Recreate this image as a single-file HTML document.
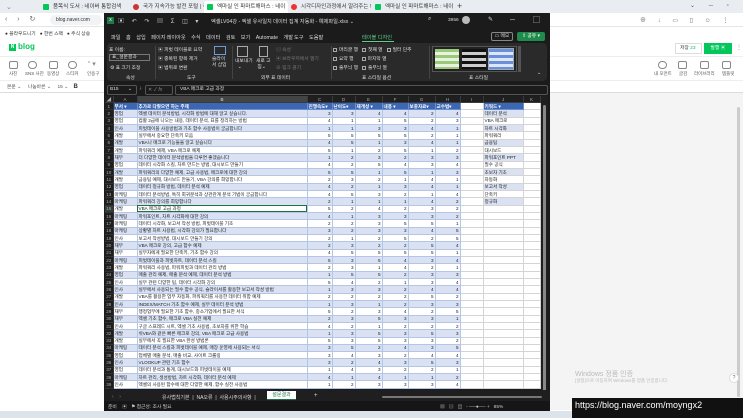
<!DOCTYPE html>
<html><head><meta charset="utf-8">
<style>
*{box-sizing:border-box;margin:0;padding:0}
body{width:743px;height:418px;overflow:hidden;position:relative;background:#fff;font-family:"Liberation Sans","Noto Sans CJK KR",sans-serif;font-size:6px;color:#333}
.a{position:absolute;white-space:nowrap}
.tab{position:absolute;top:1px;height:12px;font-size:5.5px;line-height:12px;color:#333;padding-left:13px}
.tab i{position:absolute;left:3px;top:3px;width:6px;height:6px;background:#03c75a;border-radius:1px}
.ib{position:absolute;width:9px;height:8px;border:1px solid #888;border-radius:2px}
.lab{position:absolute;font-size:4.5px;color:#555}
#xl{position:absolute;left:104px;top:13px;width:446px;height:398px;background:#1b1b1b;color:#ddd;overflow:hidden}
#xl .a{color:#ddd}
.rib{position:absolute;left:3px;top:30px;width:440px;height:38px;background:#2a2a2a;border-radius:4px}
.sep{position:absolute;top:33px;width:1px;height:33px;background:#444}
.rt{position:absolute;font-size:4.8px;color:#ddd}
.chk{display:inline-block;width:4px;height:4px;border:0.6px solid #aaa;margin-right:2px;vertical-align:middle}
table{position:absolute;left:1px;top:83px;border-collapse:collapse;table-layout:fixed;font-size:4.6px}
tr{height:7.33px}
td{height:7.33px;padding:0 1px;overflow:hidden;white-space:nowrap;line-height:5px;color:#222;border-right:0.5px solid #d4d4d4;border-bottom:0.5px solid #d4d4d4}
td.n{text-align:right}
td.h{background:#1f1f1f;color:#aaa;text-align:center;border-color:#333}
tr.ch{height:6.5px}
tr.ch td{height:6.5px;background:#1f1f1f;color:#aaa;text-align:center;border-color:#3a3a3a}
tr.hd td.t{background:#3b67b4;color:#fff;font-weight:bold;border-color:#6b8ed0}
tr.b td.t{background:#d9e1f2;border-color:#b4c6e7}
tr.w td.t{background:#fff;border-color:#b4c6e7}
td.kw{background:#d9e1f2}
td.e{background:#fff}
</style></head><body>
<div class="a" style="left:0;top:0;width:743px;height:13px;background:#e9edf1"></div>
<div class="a" style="left:6px;top:3px;font-size:7px;color:#888">⌄</div>
<div class="tab" style="left:40px;width:88px">품목식 도서 : 네이버 통합검색<i></i></div>
<div class="tab" style="left:130px;width:84px">국가 지속가능 발전 포털 | 국가<i style="background:#c33;border-radius:3px"></i></div>
<div class="tab" style="left:204px;width:84px;background:#fff;border-radius:3px 3px 0 0">엑마실 인 파마트해마스 : 네이버<i></i></div>
<div class="tab" style="left:288px;width:84px">시각디자인과정에서 알려주는 !<i style="background:#e33;border-radius:3px"></i></div>
<div class="tab" style="left:372px;width:84px">엑마실 인 파마트해마스 : 네이버<i></i></div>
<div class="a" style="left:457px;top:1px;font-size:9px;color:#444">+</div>
<div class="a" style="left:690px;top:2px;font-size:6px;color:#555;letter-spacing:6px">⌄ ─ ▫ ✕</div>
<div class="a" style="left:0;top:13px;width:743px;height:14px;background:#fff;border-bottom:1px solid #e5e5e5"></div>
<div class="a" style="left:5px;top:15px;font-size:7px;color:#666;letter-spacing:4px">‹ › ↻</div>
<div class="a" style="left:50px;top:15px;width:52px;height:10px;background:#f1f3f4;border-radius:5px;font-size:5px;line-height:10px;padding-left:6px;color:#333">blog.naver.com</div>
<div class="a" style="left:640px;top:15px;font-size:6px;color:#666;letter-spacing:5px">⊕ ↓ ▭ ▯ ☺ ⋮</div>
<div class="a" style="left:5px;top:30px;font-size:4.8px;color:#333">● 블라우드니기 &nbsp; ● 한번 스팩 &nbsp; ● 주식 상승</div>
<div class="a" style="left:0;top:38px;width:743px;height:19px;border-bottom:1px solid #eee"></div>
<div class="a" style="left:9px;top:44px;width:7px;height:7px;background:#03c75a;color:#fff;font-size:5px;line-height:7px;text-align:center;font-weight:bold">N</div>
<div class="a" style="left:18px;top:42px;font-size:8px;color:#03c75a;font-weight:bold">blog</div>
<div class="a" style="left:675px;top:43px;width:27px;height:11px;border:1px solid #ddd;font-size:4.8px;line-height:9px;padding-left:4px;color:#333">저장 <span style="color:#03c75a">23</span></div>
<div class="a" style="left:704px;top:43px;width:28px;height:11px;background:#03c75a;font-size:4.8px;line-height:11px;text-align:center;color:#fff">발행 ▣</div>
<div class="a" style="left:736px;top:44px;font-size:6px;color:#999">⋮</div>
<div class="ib" style="left:9px;top:61px"></div><div class="lab" style="left:9px;top:71px">사진</div>
<div class="ib" style="left:28px;top:61px;border-radius:5px"></div><div class="lab" style="left:25px;top:71px">SNS 사진</div>
<div class="ib" style="left:49px;top:61px"></div><div class="lab" style="left:47px;top:71px">동영상</div>
<div class="ib" style="left:68px;top:61px;border-radius:5px"></div><div class="lab" style="left:66px;top:71px">스티커</div>
<div class="a" style="left:88px;top:60px;font-size:7px;color:#888">“ ▾</div><div class="lab" style="left:87px;top:71px">인용구</div>
<div class="ib" style="left:658px;top:61px;border-radius:5px"></div><div class="lab" style="left:654px;top:71px">내 모먼트</div>
<div class="ib" style="left:678px;top:61px"></div><div class="lab" style="left:679px;top:71px">글감</div>
<div class="ib" style="left:700px;top:61px"></div><div class="lab" style="left:694px;top:71px">라이브러리</div>
<div class="ib" style="left:722px;top:61px"></div><div class="lab" style="left:722px;top:71px">템플릿</div>
<div class="a" style="left:0;top:80px;width:743px;height:1px;background:#eee"></div>
<div class="a" style="left:7px;top:83px;font-size:4.8px;color:#555">본문 ⌄ &nbsp;&nbsp;&nbsp; 나눔바른 ⌄ &nbsp;&nbsp;&nbsp; 15 ⌄ &nbsp;&nbsp; <b style="font-size:6px;color:#333">B</b></div>
<div class="a" style="left:0;top:92px;width:743px;height:1px;background:#ddd"></div>
<div class="a" style="left:550px;top:93px;width:193px;height:317px;background:#f4f4f4"></div>
<div class="a" style="left:737px;top:107px;width:3px;height:290px;background:#ccc;border-radius:2px"></div>
<div class="a" style="left:729px;top:373px;width:10px;height:10px;border:1px solid #ddd;border-radius:5px;background:#fff;font-size:5px;text-align:center;line-height:8px;color:#666">?</div>
<div class="a" style="left:575px;top:369px;font-size:7px;color:#bbb">Windows 정품 인증</div>
<div class="a" style="left:575px;top:378px;font-size:4.5px;color:#bbb">[설정]으로 이동하여 Windows를 정품 인증합니다.</div>

<div id="xl">
 <div class="a" style="left:3px;top:4px;width:7px;height:7px;background:#1d7a45;color:#fff;font-size:5px;line-height:7px;text-align:center">x</div>
 <div class="a" style="left:14px;top:3px;font-size:6px;color:#ccc;letter-spacing:3px">▣ ↶ ↷ ▤ Σ ◫ ▾</div>
 <div class="a" style="left:107px;top:5px;font-size:5.2px">엑셀LV04강 - 엑셀 유사일치 데이터 집계 자동화 - 예제파일.xlsx ⌄</div>
 <div class="a" style="left:324px;top:3px;font-size:6px">⌕</div>
 <div class="a" style="left:344px;top:5px;font-size:4.8px">3956</div>
 <div class="a" style="left:358px;top:3px;width:8px;height:8px;border-radius:4px;background:#bbb"></div>
 <div class="a" style="left:384px;top:3px;font-size:6px">✎</div>
 <div class="a" style="left:406px;top:2px;font-size:7px;letter-spacing:8px">─ ▢ ✕</div>
 <div class="a" style="left:7px;top:21px;font-size:5.2px;word-spacing:4px">파일 홈 삽입 페이지&#8239;레이아웃 수식 데이터 검토 보기 Automate 개발&#8239;도구 도움말</div>
 <div class="a" style="left:258px;top:21px;font-size:5.2px;color:#5fd08a!important">테이블 디자인</div>
 <div class="a" style="left:258px;top:28px;width:32px;height:1px;background:#5fd08a"></div>
 <div class="a" style="left:387px;top:19px;width:22px;height:9px;border:1px solid #888;border-radius:2px;font-size:4.8px;line-height:7px;text-align:center">▭ 메모</div>
 <div class="a" style="left:413px;top:19px;width:28px;height:9px;background:#1f8b4c;border-radius:2px;font-size:4.8px;line-height:9px;text-align:center;color:#fff">⇪ 공유 ▾</div>
 <div class="rib"></div>
 <div class="sep" style="left:51px"></div><div class="sep" style="left:128px"></div><div class="sep" style="left:227px"></div><div class="sep" style="left:325px"></div>
 <div class="rt" style="left:5px;top:33px">표 이름:</div>
 <div class="a" style="left:5px;top:41px;width:41px;height:7px;border:1px solid #777;font-size:4.8px;line-height:5px;padding-left:2px">표_설문결과</div>
 <div class="rt" style="left:6px;top:51px">⚙ 표 크기 조정</div>
 <div class="rt" style="left:22px;top:61px">속성</div>
 <div class="rt" style="left:54px;top:33px">▣ 피벗 테이블로 요약</div>
 <div class="rt" style="left:54px;top:42px">▣ 중복된 항목 제거</div>
 <div class="rt" style="left:54px;top:51px">▣ 범위로 변환</div>
 <div class="a" style="left:110px;top:33px;width:12px;height:9px;border:1px solid #6b9bd6"></div>
 <div class="rt" style="left:108px;top:44px;line-height:6px">슬라이<br>서 삽입</div>
 <div class="rt" style="left:83px;top:61px">도구</div>
 <div class="a" style="left:133px;top:33px;width:11px;height:11px;border:1px solid #aaa"></div>
 <div class="rt" style="left:131px;top:46px;line-height:6px">내보내기<br>&nbsp;&nbsp;⌄</div>
 <div class="a" style="left:155px;top:33px;width:9px;height:11px;border:1px solid #aaa"></div>
 <div class="rt" style="left:152px;top:46px;line-height:6px">새로 고<br>&nbsp;침⌄</div>
 <div class="rt" style="left:172px;top:33px;color:#777">▤ 속성</div>
 <div class="rt" style="left:172px;top:42px;color:#777">▣ 브라우저에서 열기</div>
 <div class="rt" style="left:172px;top:51px;color:#777">⊘ 링크 끊기</div>
 <div class="rt" style="left:157px;top:61px">외부 표 데이터</div>
 <div class="rt" style="left:229px;top:33px"><span class="chk"></span>머리글 행 &nbsp;&nbsp;<span class="chk"></span>첫째 열 &nbsp;&nbsp;<span class="chk"></span>필터 단추</div>
 <div class="rt" style="left:229px;top:42px"><span class="chk"></span>요약 행 &nbsp;&nbsp;&nbsp;&nbsp;&nbsp;<span class="chk"></span>마지막 열</div>
 <div class="rt" style="left:229px;top:51px"><span class="chk"></span>줄무늬 행 &nbsp;&nbsp;<span class="chk"></span>줄무늬 열</div>
 <div class="rt" style="left:258px;top:61px">표 스타일 옵션</div>
 <div class="a" style="left:328px;top:33px;width:85px;height:26px;border:1px solid #555;background:#222"></div>
 <div class="a" style="left:331px;top:36px;width:24px;height:20px;background:repeating-linear-gradient(#9bc97a 0 3px,#e8f3df 3px 6px)"></div>
 <div class="a" style="left:358px;top:36px;width:24px;height:20px;background:repeating-linear-gradient(#111 0 3px,#ccc 3px 6px)"></div>
 <div class="a" style="left:384px;top:35px;width:26px;height:22px;border:1px solid #9ab;background:repeating-linear-gradient(#6b8fd6 0 3px,#dde6f6 3px 6px)"></div>
 <div class="a" style="left:414px;top:33px;width:3px;height:26px;background:#555"></div>
 <div class="rt" style="left:365px;top:61px">표 스타일</div>
 <div class="rt" style="left:433px;top:58px">⌄</div>
 <div class="a" style="left:3px;top:72px;width:30px;height:10px;border:1px solid #555;border-radius:2px;font-size:4.8px;line-height:8px;padding-left:2px">B15 &nbsp;&nbsp;&nbsp;&nbsp;&nbsp;&nbsp;⌄</div>
 <div class="a" style="left:36px;top:73px;font-size:5px">⁝</div>
 <div class="a" style="left:41px;top:72px;width:28px;height:10px;border:1px solid #555;border-radius:2px;font-size:5px;line-height:8px;color:#888!important;padding-left:2px">✕ ✓ <i>fx</i></div>
 <div class="a" style="left:71px;top:72px;width:373px;height:10px;border:1px solid #555;border-radius:2px;font-size:4.8px;line-height:8px;padding-left:4px">VBA 매크로 고급 과정</div>
 <table>
 <colgroup><col style="width:8px"><col style="width:24px"><col style="width:170px"><col style="width:25px"><col style="width:23px"><col style="width:27px"><col style="width:26px"><col style="width:27px"><col style="width:25px"><col style="width:23px"><col style="width:40px"><col style="width:17px"></colgroup>
 <tr class="ch"><td>◢</td><td>A</td><td style="background:#444;color:#ddd">B</td><td>C</td><td>D</td><td>E</td><td>F</td><td>G</td><td>H</td><td>I</td><td>J</td><td>K</td></tr>
 <tr class="hd"><td class="h">1</td><td class="t">부서 ▾</td><td class="t">추가로 다뤘으면 하는 주제</td><td class="t">진행속도▾</td><td class="t">난이도▾</td><td class="t">재개성 ▾</td><td class="t">내용 ▾</td><td class="t">보충자료▾</td><td class="t">교수법▾</td><td class="e"></td><td class="t">키워드 ▾</td><td class="e"></td></tr>
 <tr class="b"><td class="h">2</td><td class="t">영업</td><td class="t">엑셀 데이터 분석방법, 시각화 방법에 대해 알고 싶습니다.</td><td class="t n">3</td><td class="t n">3</td><td class="t n">4</td><td class="t n">4</td><td class="t n">2</td><td class="t n">4</td><td class="e"></td><td class="kw">데이터 분석</td><td class="e"></td></tr>
 <tr class="w"><td class="h">3</td><td class="t">영업</td><td class="t">컴활 2급에 나오는 내용, 데이터 분석, 표를 정리하는 방법</td><td class="t n">4</td><td class="t n">1</td><td class="t n">1</td><td class="t n">5</td><td class="t n">2</td><td class="t n">3</td><td class="e"></td><td class="e">VBA 매크로</td><td class="e"></td></tr>
 <tr class="b"><td class="h">4</td><td class="t">인사</td><td class="t">피벗테이블 사용방법과 기초 함수 사용법이 궁금합니다</td><td class="t n">1</td><td class="t n">1</td><td class="t n">3</td><td class="t n">3</td><td class="t n">4</td><td class="t n">1</td><td class="e"></td><td class="kw">차트 시각화</td><td class="e"></td></tr>
 <tr class="w"><td class="h">5</td><td class="t">개발</td><td class="t">실무에서 중요한 단축키 모음</td><td class="t n">5</td><td class="t n">5</td><td class="t n">5</td><td class="t n">5</td><td class="t n">2</td><td class="t n">1</td><td class="e"></td><td class="e">파워쿼리</td><td class="e"></td></tr>
 <tr class="b"><td class="h">6</td><td class="t">개발</td><td class="t">VBA나 매크로 기능들을 알고 싶습니다</td><td class="t n">4</td><td class="t n">5</td><td class="t n">1</td><td class="t n">3</td><td class="t n">4</td><td class="t n">1</td><td class="e"></td><td class="kw">금융팀</td><td class="e"></td></tr>
 <tr class="w"><td class="h">7</td><td class="t">개발</td><td class="t">파워쿼리 예제, VBA 매크로 예제</td><td class="t n">5</td><td class="t n">1</td><td class="t n">2</td><td class="t n">5</td><td class="t n">1</td><td class="t n">2</td><td class="e"></td><td class="e">대시보드</td><td class="e"></td></tr>
 <tr class="b"><td class="h">8</td><td class="t">재무</td><td class="t">더 다양한 데이터 분석방법을 다루면 좋겠습니다</td><td class="t n">1</td><td class="t n">2</td><td class="t n">3</td><td class="t n">2</td><td class="t n">3</td><td class="t n">3</td><td class="e"></td><td class="kw">파워포인트 PPT</td><td class="e"></td></tr>
 <tr class="w"><td class="h">9</td><td class="t">영업</td><td class="t">데이터 시각화 스킬, 차트 만드는 방법, 대시보드 만들기</td><td class="t n">4</td><td class="t n">2</td><td class="t n">5</td><td class="t n">4</td><td class="t n">3</td><td class="t n">4</td><td class="e"></td><td class="e">필수 공식</td><td class="e"></td></tr>
 <tr class="b"><td class="h">10</td><td class="t">개발</td><td class="t">파워쿼리의 다양한 예제, 고급 사용법, 매크로에 대한 강의</td><td class="t n">5</td><td class="t n">5</td><td class="t n">1</td><td class="t n">5</td><td class="t n">1</td><td class="t n">3</td><td class="e"></td><td class="kw">초보자 기초</td><td class="e"></td></tr>
 <tr class="w"><td class="h">11</td><td class="t">개발</td><td class="t">금융팀 예제, 대시보드 만들기, VBA 강의를 희망합니다</td><td class="t n">2</td><td class="t n">3</td><td class="t n">2</td><td class="t n">1</td><td class="t n">4</td><td class="t n">1</td><td class="e"></td><td class="e">자동화</td><td class="e"></td></tr>
 <tr class="b"><td class="h">12</td><td class="t">영업</td><td class="t">데이터 정규화 방법, 데이터 분석 예제</td><td class="t n">4</td><td class="t n">2</td><td class="t n">1</td><td class="t n">3</td><td class="t n">4</td><td class="t n">1</td><td class="e"></td><td class="kw">보고서 작성</td><td class="e"></td></tr>
 <tr class="w"><td class="h">13</td><td class="t">마케팅</td><td class="t">데이터 분석방법, 특히 회귀분석과 상관관계 분석 기법이 궁금합니다</td><td class="t n">4</td><td class="t n">5</td><td class="t n">3</td><td class="t n">2</td><td class="t n">1</td><td class="t n">4</td><td class="e"></td><td class="e">단축키</td><td class="e"></td></tr>
 <tr class="b"><td class="h">14</td><td class="t">마케팅</td><td class="t">파워쿼리 강의를 희망합니다</td><td class="t n">2</td><td class="t n">1</td><td class="t n">1</td><td class="t n">1</td><td class="t n">4</td><td class="t n">2</td><td class="e"></td><td class="kw">정규화</td><td class="e"></td></tr>
 <tr class="w"><td class="h" style="background:#3a3a3a;color:#6fd08f">15</td><td class="t">개발</td><td class="t" style="outline:1px solid #1e7145;outline-offset:-1px">VBA 매크로 고급 과정</td><td class="t n">5</td><td class="t n">2</td><td class="t n">4</td><td class="t n">2</td><td class="t n">3</td><td class="t n">2</td><td class="e"></td><td class="e"></td><td class="e"></td></tr>
 <tr class="b"><td class="h">16</td><td class="t">마케팅</td><td class="t">파워포인트, 차트 시각화에 대한 강의</td><td class="t n">4</td><td class="t n">1</td><td class="t n">3</td><td class="t n">3</td><td class="t n">3</td><td class="t n">2</td><td class="e"></td><td class="e"></td><td class="e"></td></tr>
 <tr class="w"><td class="h">17</td><td class="t">마케팅</td><td class="t">데이터 시각화, 보고서 작성 방법, 피벗테이블 기초</td><td class="t n">2</td><td class="t n">2</td><td class="t n">3</td><td class="t n">5</td><td class="t n">5</td><td class="t n">1</td><td class="e"></td><td class="e"></td><td class="e"></td></tr>
 <tr class="b"><td class="h">18</td><td class="t">마케팅</td><td class="t">상황별 차트 사용법, 시각화 강의가 필요합니다</td><td class="t n">3</td><td class="t n">2</td><td class="t n">3</td><td class="t n">3</td><td class="t n">4</td><td class="t n">5</td><td class="e"></td><td class="e"></td><td class="e"></td></tr>
 <tr class="w"><td class="h">19</td><td class="t">인사</td><td class="t">보고서 작성방법, 대시보드 만들기 강의</td><td class="t n">2</td><td class="t n">1</td><td class="t n">2</td><td class="t n">5</td><td class="t n">2</td><td class="t n">5</td><td class="e"></td><td class="e"></td><td class="e"></td></tr>
 <tr class="b"><td class="h">20</td><td class="t">재무</td><td class="t">VBA 매크로 강의, 고급 함수 예제</td><td class="t n">2</td><td class="t n">3</td><td class="t n">2</td><td class="t n">2</td><td class="t n">5</td><td class="t n">4</td><td class="e"></td><td class="e"></td><td class="e"></td></tr>
 <tr class="w"><td class="h">21</td><td class="t">재무</td><td class="t">실무자에게 필요한 단축키, 기초 함수 강의</td><td class="t n">4</td><td class="t n">5</td><td class="t n">5</td><td class="t n">5</td><td class="t n">5</td><td class="t n">1</td><td class="e"></td><td class="e"></td><td class="e"></td></tr>
 <tr class="b"><td class="h">22</td><td class="t">마케팅</td><td class="t">피벗테이블과 피벗차트, 데이터 분석 스킬</td><td class="t n">5</td><td class="t n">3</td><td class="t n">5</td><td class="t n">4</td><td class="t n">3</td><td class="t n">4</td><td class="e"></td><td class="e"></td><td class="e"></td></tr>
 <tr class="w"><td class="h">23</td><td class="t">개발</td><td class="t">파워쿼리 사용법, 파워피벗과 데이터 관리 방법</td><td class="t n">2</td><td class="t n">3</td><td class="t n">1</td><td class="t n">4</td><td class="t n">2</td><td class="t n">1</td><td class="e"></td><td class="e"></td><td class="e"></td></tr>
 <tr class="b"><td class="h">24</td><td class="t">영업</td><td class="t">매출 관리 예제, 매출 분석 예제, 데이터 분석 방법</td><td class="t n">1</td><td class="t n">5</td><td class="t n">5</td><td class="t n">2</td><td class="t n">3</td><td class="t n">3</td><td class="e"></td><td class="e"></td><td class="e"></td></tr>
 <tr class="w"><td class="h">25</td><td class="t">인사</td><td class="t">실무 관련 다양한 팁, 데이터 시각화 강의</td><td class="t n">5</td><td class="t n">4</td><td class="t n">2</td><td class="t n">1</td><td class="t n">3</td><td class="t n">4</td><td class="e"></td><td class="e"></td><td class="e"></td></tr>
 <tr class="b"><td class="h">26</td><td class="t">인사</td><td class="t">실무에서 사용되는 필수 함수 공식, 슬라이서를 활용한 보고서 작성 방법</td><td class="t n">1</td><td class="t n">3</td><td class="t n">3</td><td class="t n">2</td><td class="t n">4</td><td class="t n">4</td><td class="e"></td><td class="e"></td><td class="e"></td></tr>
 <tr class="w"><td class="h">27</td><td class="t">개발</td><td class="t">VBA를 활용한 업무 자동화, 파워쿼리를 사용한 데이터 취합 예제</td><td class="t n">2</td><td class="t n">2</td><td class="t n">2</td><td class="t n">2</td><td class="t n">5</td><td class="t n">2</td><td class="e"></td><td class="e"></td><td class="e"></td></tr>
 <tr class="b"><td class="h">28</td><td class="t">인사</td><td class="t">INDEX/MATCH 기초 함수 예제, 실무 데이터 분석 방법</td><td class="t n">1</td><td class="t n">3</td><td class="t n">1</td><td class="t n">2</td><td class="t n">3</td><td class="t n">3</td><td class="e"></td><td class="e"></td><td class="e"></td></tr>
 <tr class="w"><td class="h">29</td><td class="t">재무</td><td class="t">행정업무에 필요한 기초 함수, 중소기업에서 필요한 서식</td><td class="t n">5</td><td class="t n">2</td><td class="t n">3</td><td class="t n">4</td><td class="t n">2</td><td class="t n">5</td><td class="e"></td><td class="e"></td><td class="e"></td></tr>
 <tr class="b"><td class="h">30</td><td class="t">재무</td><td class="t">엑셀 기초 함수, 매크로 VBA 실전 예제</td><td class="t n">2</td><td class="t n">3</td><td class="t n">5</td><td class="t n">3</td><td class="t n">3</td><td class="t n">1</td><td class="e"></td><td class="e"></td><td class="e"></td></tr>
 <tr class="w"><td class="h">31</td><td class="t">인사</td><td class="t">구글 스프레드 시트, 엑셀 기초 사용법, 초보자를 위한 학습</td><td class="t n">4</td><td class="t n">2</td><td class="t n">1</td><td class="t n">2</td><td class="t n">2</td><td class="t n">2</td><td class="e"></td><td class="e"></td><td class="e"></td></tr>
 <tr class="b"><td class="h">32</td><td class="t">개발</td><td class="t">쉬VBA와 같은 빠른 매크로 강의, VBA 매크로 고급 사용법</td><td class="t n">1</td><td class="t n">3</td><td class="t n">5</td><td class="t n">3</td><td class="t n">5</td><td class="t n">3</td><td class="e"></td><td class="e"></td><td class="e"></td></tr>
 <tr class="w"><td class="h">33</td><td class="t">개발</td><td class="t">실무에서 꼭 필요한 VBA 완성 방법론</td><td class="t n">5</td><td class="t n">3</td><td class="t n">5</td><td class="t n">3</td><td class="t n">3</td><td class="t n">2</td><td class="e"></td><td class="e"></td><td class="e"></td></tr>
 <tr class="b"><td class="h">34</td><td class="t">마케팅</td><td class="t">데이터 분석 스킬과 피벗테이블 예제, 매장 운영에 사용되는 서식</td><td class="t n">3</td><td class="t n">5</td><td class="t n">2</td><td class="t n">4</td><td class="t n">3</td><td class="t n">5</td><td class="e"></td><td class="e"></td><td class="e"></td></tr>
 <tr class="w"><td class="h">35</td><td class="t">영업</td><td class="t">업체별 매출 분석, 매출 비교, 사이트 크롤링</td><td class="t n">3</td><td class="t n">4</td><td class="t n">3</td><td class="t n">2</td><td class="t n">4</td><td class="t n">4</td><td class="e"></td><td class="e"></td><td class="e"></td></tr>
 <tr class="b"><td class="h">36</td><td class="t">인사</td><td class="t">VLOOKUP 관련 기초 함수</td><td class="t n">3</td><td class="t n">2</td><td class="t n">4</td><td class="t n">3</td><td class="t n">5</td><td class="t n">3</td><td class="e"></td><td class="e"></td><td class="e"></td></tr>
 <tr class="w"><td class="h">37</td><td class="t">영업</td><td class="t">데이터 분석과 통계, 대시보드와 피벗테이블 예제</td><td class="t n">1</td><td class="t n">4</td><td class="t n">3</td><td class="t n">2</td><td class="t n">2</td><td class="t n">1</td><td class="e"></td><td class="e"></td><td class="e"></td></tr>
 <tr class="b"><td class="h">38</td><td class="t">마케팅</td><td class="t">차트 관리, 생성방법, 차트 시각화, 데이터 분석 예제</td><td class="t n">4</td><td class="t n">1</td><td class="t n">4</td><td class="t n">1</td><td class="t n">1</td><td class="t n">2</td><td class="e"></td><td class="e"></td><td class="e"></td></tr>
 <tr class="w"><td class="h">39</td><td class="t">인사</td><td class="t">엑셀의 사용된 함수에 대한 다양한 예제, 함수 실전 사용법</td><td class="t n">1</td><td class="t n">2</td><td class="t n">3</td><td class="t n">3</td><td class="t n">3</td><td class="t n">4</td><td class="e"></td><td class="e"></td><td class="e"></td></tr>
 </table>
 <div class="a" style="left:437px;top:83px;width:7px;height:304px;background:#1f1f1f"></div>
 <div class="a" style="left:439px;top:92px;width:3px;height:288px;background:#888;border-radius:2px"></div>
 <div class="a" style="left:0;top:377px;width:446px;height:21px;background:#1f1f1f"></div>
 <div class="a" style="left:8px;top:381px;font-size:5px;color:#888!important">‹ &nbsp;&nbsp; ›</div>
 <div class="a" style="left:58px;top:381px;font-size:5px">유사법칙기본 &nbsp;|&nbsp; NA오류 &nbsp;|&nbsp; 사용시주의사항 &nbsp;|</div>
 <div class="a" style="left:163px;top:378px;width:29px;height:9px;background:#fff;font-size:5px;line-height:8px;text-align:center;color:#1e7145!important;border-bottom:1px solid #1e7145">설문결과</div>
 <div class="a" style="left:210px;top:380px;font-size:6px">+</div>
 <div class="a" style="left:278px;top:383px;width:160px;height:2px;background:#777;border-radius:1px"></div>
 <div class="a" style="left:0;top:388px;width:446px;height:10px;background:#161616"></div>
</div>
<div class="a" style="left:108px;top:403px;font-size:4.8px;color:#ccc">준비 &nbsp;&nbsp; ▣ &nbsp; ⚑ 접근성: 조사 필요</div>
<div class="a" style="left:440px;top:403px;font-size:4.8px;color:#ccc">▦ &nbsp; ▤ &nbsp; ◫ &nbsp; - ──●── + &nbsp; 85%</div>
<div class="a" style="left:0;top:411px;width:743px;height:7px;background:#dde3ea"></div>
<div class="a" style="left:572px;top:398px;width:171px;height:20px;background:#111"></div>
<div class="a" style="left:575px;top:400px;font-size:9px;color:#fff;font-family:'Liberation Sans',sans-serif">https://blog.naver.com/moyngx2</div>
</body></html>
